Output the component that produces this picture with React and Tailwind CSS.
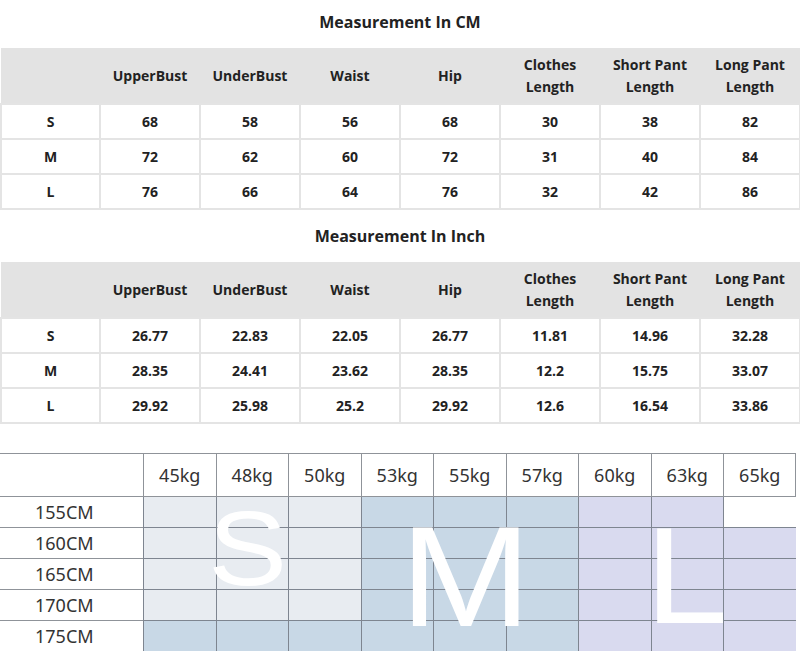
import React from "react";

const heads = ["", "UpperBust", "UnderBust", "Waist", "Hip", "Clothes Length", "Short Pant Length", "Long Pant Length"];

const cmRows = [
  ["S", "68", "58", "56", "68", "30", "38", "82"],
  ["M", "72", "62", "60", "72", "31", "40", "84"],
  ["L", "76", "66", "64", "76", "32", "42", "86"],
];

const inchRows = [
  ["S", "26.77", "22.83", "22.05", "26.77", "11.81", "14.96", "32.28"],
  ["M", "28.35", "24.41", "23.62", "28.35", "12.2", "15.75", "33.07"],
  ["L", "29.92", "25.98", "25.2", "29.92", "12.6", "16.54", "33.86"],
];

const weights = ["45kg", "48kg", "50kg", "53kg", "55kg", "57kg", "60kg", "63kg", "65kg"];
const heights = ["155CM", "160CM", "165CM", "170CM", "175CM"];

// cell colour by weight column / height row
const cellColor = (col, row) => {
  if (col < 3) return row === 4 ? "bg-[#c8d8e6]" : "bg-[#e8ecf1]";
  if (col < 6) return "bg-[#c8d8e6]";
  if (col === 8 && row === 0) return "bg-white";
  return "bg-[#d9daef]";
};

const SizeTable = ({ title, rows, titleClass }) => {
  return (
    <>
      <div className={titleClass + " flex items-center justify-center text-base font-bold text-[#222]"}>
        {title}
      </div>
      <table className="w-[799px] table-fixed border-collapse text-sm font-bold text-[#222]">
        <thead>
          <tr className="h-[56px] bg-[#e3e3e3]">
            {heads.map((h, i) => (
              <th key={i} className={(i === 0 ? "w-[99px]" : "w-[100px]") + " px-1 text-center font-bold leading-[22px]"}>
                {h === "Clothes Length" ? <>Clothes<br />Length</> :
                  h === "Short Pant Length" ? <>Short Pant<br />Length</> :
                    h === "Long Pant Length" ? <>Long Pant<br />Length</> : h}
              </th>
            ))}
          </tr>
        </thead>
        <tbody>
          {rows.map((r, i) => (
            <tr key={i} className="h-[35px]">
              {r.map((c, j) => (
                <td key={j} className="border-2 border-[#e4e4e4] text-center">{c}</td>
              ))}
            </tr>
          ))}
        </tbody>
      </table>
    </>
  );
};

const WeightChart = () => {
  return (
    <div className="relative mt-[29px] w-[796px] font-['Noto_Sans',sans-serif] text-[18px] text-[#333]">
      <div className="grid grid-cols-[143px_repeat(9,_72.5px)] border-t border-r border-[#8f9399]">
        <div className="h-[43px] border-b border-[#8f9399]" />
        {weights.map((w) => (
          <div key={w} className="flex h-[43px] items-center justify-center border-b border-l border-[#8f9399]">
            {w}
          </div>
        ))}
        {heights.map((h, row) => (
          <React.Fragment key={h}>
            <div className="flex h-[31px] items-center border-b border-[#8f9399] pl-[35px]">{h}</div>
            {weights.map((w, col) => (
              <div key={w} className={"h-[31px] border-b border-l border-[#7e8590] " + cellColor(col, row)} />
            ))}
          </React.Fragment>
        ))}
      </div>
      <span className="absolute left-[208px] top-[53px] origin-left scale-x-[1.12] font-['Liberation_Sans',Arial,sans-serif] text-[106px] leading-[0.8] text-white">S</span>
      <span className="absolute left-[400px] top-[67px] origin-left scale-x-[1.11] font-['Liberation_Sans',Arial,sans-serif] text-[142px] leading-[0.8] text-white">M</span>
      <span className="absolute left-[645px] top-[67px] origin-left scale-x-[1.08] font-['Liberation_Sans',Arial,sans-serif] text-[138px] leading-[0.8] text-white">L</span>
    </div>
  );
};

export default function App() {
  return (
    <div className="h-[651px] w-[800px] overflow-hidden bg-white font-['Open_Sans',sans-serif]">
      <SizeTable title="Measurement In CM" rows={cmRows} titleClass="h-[48px] pb-[4px]" />
      <SizeTable title="Measurement In Inch" rows={inchRows} titleClass="h-[52px]" />
      <WeightChart />
    </div>
  );
}
